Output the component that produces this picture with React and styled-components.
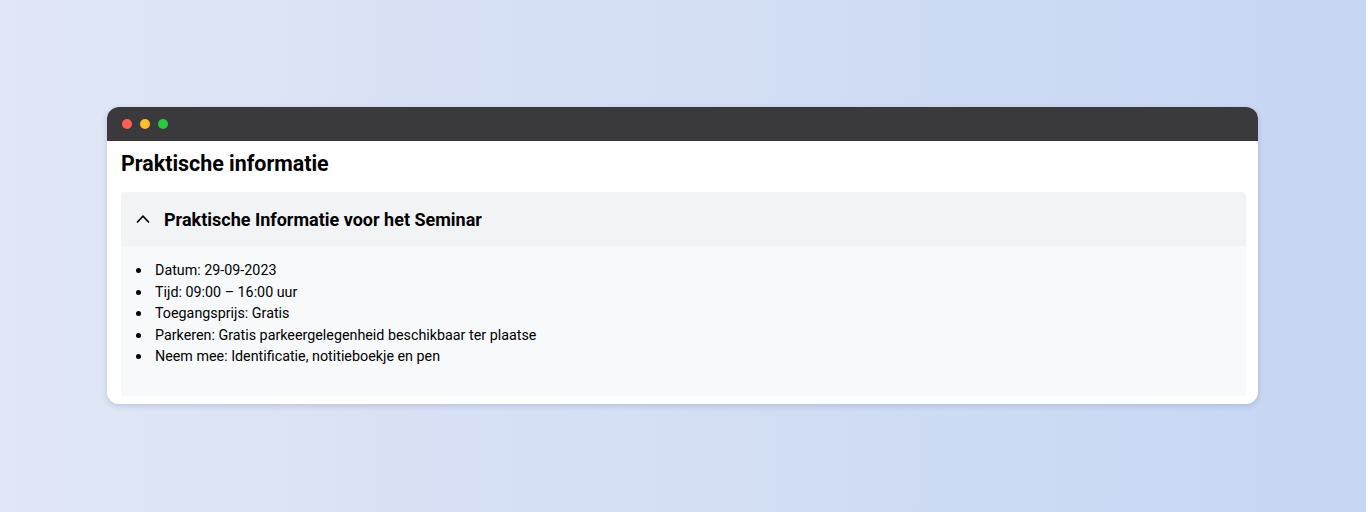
import React from "react";
import styled, { createGlobalStyle } from "styled-components";

const Global = createGlobalStyle`
  html, body { margin: 0; padding: 0; }
  body {
    width: 1366px;
    height: 512px;
    background: linear-gradient(90deg, #e1e7f6 0%, #c6d6f3 100%);
    font-family: Roboto, "Noto Sans", sans-serif;
    color: #111;
    overflow: hidden;
  }
`;

const Page = styled.div`
  padding: 107px 108px 0 107px;
`;

const Window = styled.div`
  background: #fff;
  border-radius: 12px;
  overflow: hidden;
  box-shadow: 0 2px 6px rgba(40, 60, 110, 0.18);
`;

const TitleBar = styled.div`
  height: 34px;
  background: #3a3a3c;
  display: flex;
  align-items: center;
  gap: 8px;
  padding-left: 15px;
`;

const Dot = styled.span`
  width: 10px;
  height: 10px;
  border-radius: 50%;
  background: ${(p) => p.$c};
`;

const Body = styled.div`
  padding: 9px 12px 8px 14px;
`;

const Heading = styled.h2`
  margin: 0 0 14px;
  font-size: 21.4px;
  line-height: 28px;
  font-weight: 700;
  color: #000;
`;

const Header = styled.div`
  height: 54px;
  background: #f2f3f5;
  border-radius: 4px 4px 0 0;
  display: flex;
  align-items: center;
  gap: 13px;
  padding-left: 14px;
`;

const HeaderTitle = styled.span`
  font-size: 18px;
  font-weight: 700;
  color: #000;
`;

const Panel = styled.div`
  background: #f8f9fb;
  padding: 14px 14px 28px 14px;
`;

const List = styled.ul`
  margin: 0;
  padding: 0;
  list-style: none;
  font-size: 14.3px;
  line-height: 21.5px;
  color: #000;
`;

const Item = styled.li`
  display: flex;
  align-items: center;
  &::before {
    content: "";
    flex: none;
    width: 5px;
    height: 5px;
    border-radius: 50%;
    background: #000;
    margin: 0 14px 0 1px;
  }
`;

const Chevron = () => (
  <svg width="16" height="16" viewBox="0 0 16 16" fill="none" stroke="#000" strokeWidth="1.7" strokeLinecap="round" strokeLinejoin="round">
    <path d="M2.5 11L8 5.2L13.5 11" />
  </svg>
);

const items = [
  "Datum: 29-09-2023",
  "Tijd: 09:00 – 16:00 uur",
  "Toegangsprijs: Gratis",
  "Parkeren: Gratis parkeergelegenheid beschikbaar ter plaatse",
  "Neem mee: Identificatie, notitieboekje en pen",
];

export default function App() {
  return (
    <>
      <Global />
      <Page>
        <Window>
          <TitleBar>
            <Dot $c="#ff5f57" />
            <Dot $c="#febc2e" />
            <Dot $c="#28c840" />
          </TitleBar>
          <Body>
            <Heading>Praktische informatie</Heading>
            <Header>
              <Chevron />
              <HeaderTitle>Praktische Informatie voor het Seminar</HeaderTitle>
            </Header>
            <Panel>
              <List>
                {items.map((t) => (
                  <Item key={t}>{t}</Item>
                ))}
              </List>
            </Panel>
          </Body>
        </Window>
      </Page>
    </>
  );
}
